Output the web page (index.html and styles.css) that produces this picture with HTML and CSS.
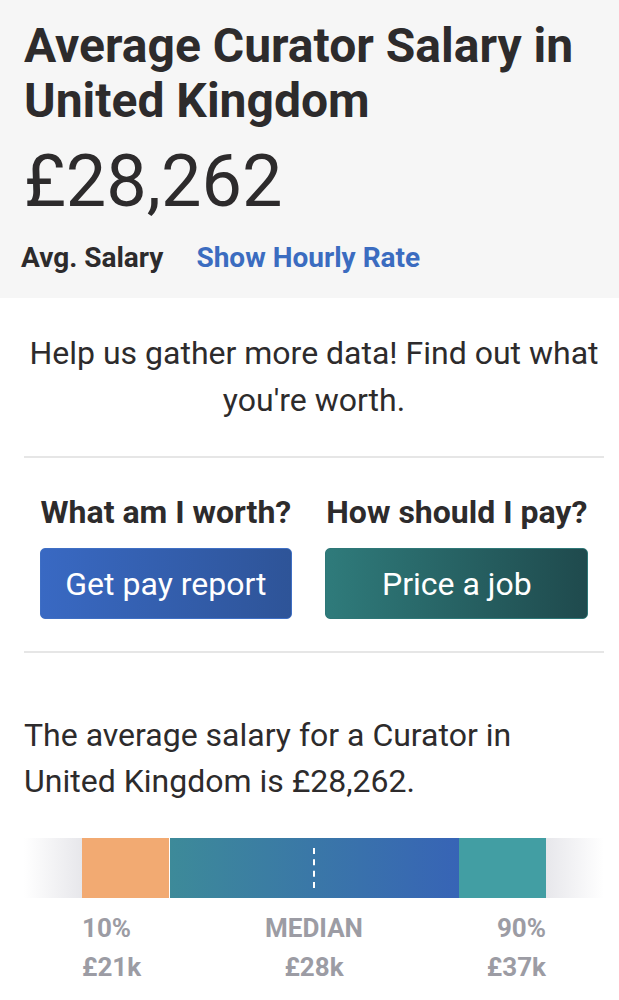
FILE: index.html
```html
<!DOCTYPE html>
<html lang="en-GB">
<head>
  <meta charset="UTF-8">
  <meta name="viewport" content="width=device-width, initial-scale=1.0">
  <title>Average Curator Salary in United Kingdom</title>
  <link rel="stylesheet" href="styles.css">
</head>
<body>
  <div class="header">
    <h1 class="title">Average Curator Salary in United Kingdom</h1>
    <div class="salary">£28,262</div>
    <div class="salary-meta">
      <span class="meta-label">Avg. Salary</span>
      <a class="meta-link" href="#">Show Hourly Rate</a>
    </div>
  </div>

  <div class="content">
    <p class="help">Help us gather more data! Find out what you're worth.</p>

    <div class="actions">
      <div class="action">
        <div class="action-title">What am I worth?</div>
        <a class="btn btn-blue" href="#">Get pay report</a>
      </div>
      <div class="action">
        <div class="action-title">How should I pay?</div>
        <a class="btn btn-teal" href="#">Price a job</a>
      </div>
    </div>

    <p class="summary">The average salary for a Curator in United Kingdom is £28,262.</p>

    <div class="range">
      <div class="fade fade-left"></div>
      <div class="seg seg-low"></div>
      <div class="seg seg-mid"><span class="median-line"></span></div>
      <div class="seg seg-high"></div>
      <div class="fade fade-right"></div>
    </div>
    <div class="range-labels">
      <div class="pad"></div>
      <div class="lbl lbl-low">10%<br>£21k</div>
      <div class="lbl lbl-mid">MEDIAN<br>£28k</div>
      <div class="lbl lbl-high">90%<br>£37k</div>
      <div class="pad"></div>
    </div>
  </div>
</body>
</html>
```

FILE: styles.css
```css
body {
  margin: 0;
  background: #ffffff;
  color: #2d2b2c;
  font-family: Roboto, "Liberation Sans", sans-serif;
}
.header {
  background: #f6f6f6;
  padding: 18px 15px 23px 24px;
}
.title {
  margin: 0;
  font-size: 48px;
  line-height: 55px;
  font-weight: 700;
}
.salary {
  margin-top: 12px;
  font-size: 72px;
  line-height: 84px;
  font-weight: 400;
}
.salary-meta {
  margin-top: 17px;
  font-size: 28px;
  line-height: 34px;
  font-weight: 700;
  display: flex;
  gap: 33px;
}
.meta-label {
  margin-left: -3px;
}
.meta-link {
  color: #3b6cc0;
  text-decoration: none;
}
.content {
  padding: 0 15px 30px 24px;
}
.help {
  margin: 32px 0 0;
  padding-bottom: 32px;
  border-bottom: 2px solid #e6e6e6;
  text-align: center;
  font-size: 32px;
  line-height: 47px;
}
.actions {
  display: flex;
  justify-content: center;
  gap: 33px;
  padding: 37px 0 32px;
  border-bottom: 2px solid #e6e6e6;
}
.action {
  display: flex;
  flex-direction: column;
}
.action-title {
  font-size: 32px;
  line-height: 34px;
  font-weight: 700;
  white-space: nowrap;
  text-align: center;
  padding: 0 1px;
}
.btn {
  margin-top: 19px;
  height: 71px;
  display: flex;
  align-items: center;
  justify-content: center;
  border-radius: 5px;
  color: #ffffff;
  font-size: 32px;
  text-decoration: none;
  box-sizing: border-box;
}
.btn-blue {
  background: linear-gradient(to right, #3969c3, #2e5498);
  border: 1px solid #3f6fc4;
}
.btn-teal {
  background: linear-gradient(to right, #2f7b7b, #1f4a4d);
  border: 1px solid #2e7777;
}
.summary {
  margin: 59px 0 0;
  font-size: 32px;
  line-height: 46px;
}
.range {
  margin-top: 34px;
  display: flex;
  height: 60px;
}
.fade {
  width: 58px;
}
.fade-left {
  background: linear-gradient(to right, #ffffff, #e7e7eb);
}
.fade-right {
  background: linear-gradient(to right, #e7e7eb, #ffffff);
}
.seg-low {
  width: 87px;
  background: #f2aa72;
  border-right: 1px solid #ffffff;
}
.seg-mid {
  width: 289px;
  position: relative;
  background: linear-gradient(to right, #3d8a99, #3764b6);
}
.seg-high {
  width: 87px;
  background: #429ea3;
}
.median-line {
  position: absolute;
  left: 143px;
  top: 10px;
  height: 40px;
  border-left: 2px dashed #ffffff;
}
.range-labels {
  display: flex;
  padding-top: 11px;
  color: #9c9ca4;
  font-size: 26px;
  line-height: 39px;
  font-weight: 700;
}
.pad {
  width: 58px;
}
.lbl {
  width: 154px;
}
.lbl-low {
  text-align: left;
}
.lbl-mid {
  width: 156px;
  text-align: center;
}
.lbl-high {
  text-align: right;
}
```
